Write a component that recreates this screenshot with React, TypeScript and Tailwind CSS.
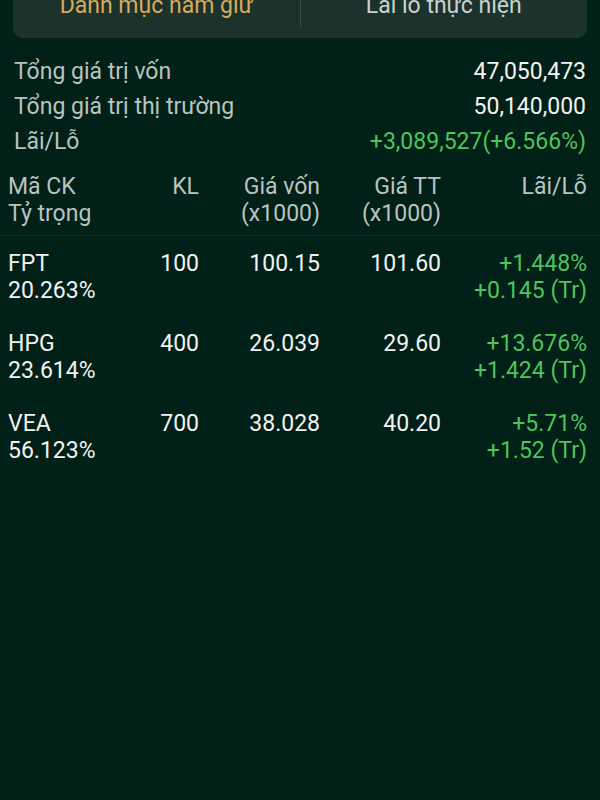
import React from "react";

const rows = [
  { code: "FPT", weight: "20.263%", kl: "100", cost: "100.15", price: "101.60", pct: "+1.448%", tr: "+0.145 (Tr)" },
  { code: "HPG", weight: "23.614%", kl: "400", cost: "26.039", price: "29.60", pct: "+13.676%", tr: "+1.424 (Tr)" },
  { code: "VEA", weight: "56.123%", kl: "700", cost: "38.028", price: "40.20", pct: "+5.71%", tr: "+1.52 (Tr)" },
];

export default function App() {
  const cols = "grid grid-cols-[140px_51px_121px_121px_1fr]";
  return (
    <div
      className="w-[600px] h-[800px] overflow-hidden bg-[#012017] text-[23px]"
      style={{ fontFamily: "Roboto, 'Noto Sans', sans-serif" }}
    >
      {/* tabs */}
      <div className="mx-[13px] -mt-[22px] h-[60px] rounded-[10px] bg-[#1c332d] flex items-start">
        <div className="flex-1 text-center text-[#d9a95a] leading-[27px] pt-[14px]">Danh mục nắm giữ</div>
        <div className="w-px self-stretch mb-[11px] bg-[#3a4f49]" />
        <div className="flex-1 text-center text-[#c9d2ce] leading-[27px] pt-[14px]">Lãi lỗ thực hiện</div>
      </div>

      {/* summary */}
      <div className="px-[14px] pt-[16px] leading-[35px]">
        <div className="flex justify-between">
          <span className="text-[#b9c4bf]">Tổng giá trị vốn</span>
          <span className="text-[#f2f2f2]">47,050,473</span>
        </div>
        <div className="flex justify-between">
          <span className="text-[#b9c4bf]">Tổng giá trị thị trường</span>
          <span className="text-[#f2f2f2]">50,140,000</span>
        </div>
        <div className="flex justify-between">
          <span className="text-[#b9c4bf]">Lãi/Lỗ</span>
          <span className="text-[#4fc35c]">+3,089,527(+6.566%)</span>
        </div>
      </div>

      {/* table header */}
      <div className={`${cols} mt-[14px] pl-[8px] pr-[13px] pb-[8px] leading-[27px] text-[#b9c4bf] border-b border-[#12302a]`}>
        <div>Mã CK<br />Tỷ trọng</div>
        <div className="text-right">KL</div>
        <div className="text-right">
          <div>Giá vốn</div>
          <div>(x1000)</div>
        </div>
        <div className="text-right">
          <div>Giá TT</div>
          <div>(x1000)</div>
        </div>
        <div className="text-right">Lãi/Lỗ</div>
      </div>

      {/* rows */}
      <div className="pt-[14px]">
        {rows.map((r) => (
          <div key={r.code} className={`${cols} pl-[8px] pr-[13px] leading-[27px] h-[80px]`}>
            <div className="text-[#f2f2f2]">
              {r.code}
              <br />
              {r.weight}
            </div>
            <div className="text-right text-[#f2f2f2]">{r.kl}</div>
            <div className="text-right text-[#f2f2f2]">{r.cost}</div>
            <div className="text-right text-[#f2f2f2]">{r.price}</div>
            <div className="text-right text-[#4fc35c]">
              {r.pct}
              <br />
              {r.tr}
            </div>
          </div>
        ))}
      </div>
    </div>
  );
}
